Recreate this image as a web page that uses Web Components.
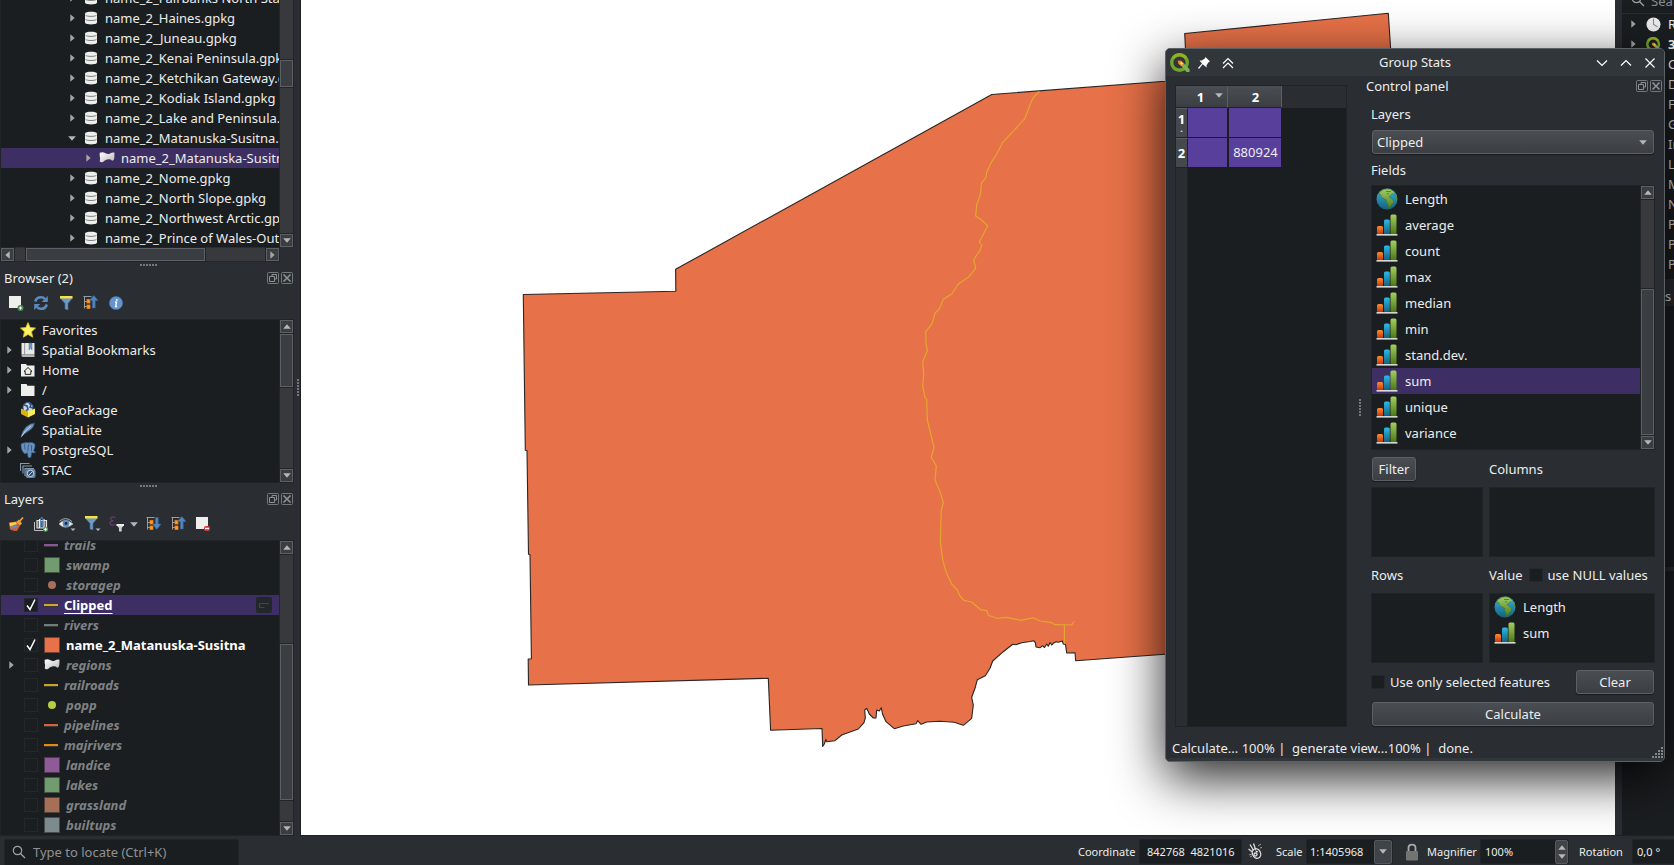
<!DOCTYPE html>
<html lang="en">
<head>
<meta charset="utf-8">
<title>QGIS – Group Stats</title>
<style>
html,body{margin:0;height:100%;overflow:hidden;background:#2a2e32}
body{font:13px "Noto Sans","Open Sans",sans-serif;color:#eceded}
</style>
</head>
<body>
<qg-app></qg-app>
<script>
const def=(name,css,html)=>customElements.define(name,class extends HTMLElement{
  constructor(){super();this.attachShadow({mode:'open'})}
  connectedCallback(){
    const a=n=>this.getAttribute(n);
    this.shadowRoot.innerHTML=`<style>*{box-sizing:border-box}${css}</style>`+(typeof html==='function'?html(a):html);
  }
});

/* ---- icons: [width, height, markup] ---- */
const tree=(up)=>`<path d="M.5 1.500h8M1.500 2v11.500M1.500 6.500H4M1.500 11.500H4" stroke="#9a9d9f" fill="none"/><rect x="4" y="4.500" width="3" height="3.500" fill="#f9a13a" stroke="#f57900" stroke-width=".8"/><rect x="4" y="10" width="3" height="3.500" fill="#f9a13a" stroke="#f57900" stroke-width=".8"/>`+(up?`<path d="M10.800 .5L15 5.500h-2.800V13H9.400V5.500H6.600z" fill="#5585ba" stroke="#3465a4" stroke-width=".6"/>`:`<path d="M9.400 1.500h2.800V8H15l-4.200 5.500L6.600 8h2.800z" fill="#5585ba" stroke="#3465a4" stroke-width=".6"/>`);
const I={
 db:[16,16,`<g fill="#eeeeec"><path d="M2 3.500C2 1 14 1 14 3.500V12.500C14 15 2 15 2 12.500z"/></g><path d="M2.500 5.200c1 1.600 10 1.600 11 0M2.500 9.300c1 1.600 10 1.600 11 0" stroke="#7d8080" fill="none" stroke-width="1"/>`],
 poly:[16,16,`<defs><linearGradient id="g" x1="0" y1="0" x2="1" y2="1"><stop stop-color="#fff"/><stop offset="1" stop-color="#b9bbb8"/></linearGradient></defs><path d="M.7 2.700Q4 1.500 6 3Q9 4.800 11 3.500Q13.500 2 15.500 2.800L15.300 8Q15 10.800 13.300 10.800Q11.500 8.800 8 9.500Q5.500 10 4 12Q1.500 12.600 .8 11.500Q1.600 8 .7 6z" fill="url(#g)"/>`],
 star:[16,16,`<path d="M8 .6l2.200 5 5.300.5-4 3.600 1.200 5.500L8 12.400l-4.700 2.800 1.200-5.500-4-3.600 5.300-.5z" fill="#fdf36a" stroke="#d9bd17" stroke-width=".9"/>`],
 book:[16,16,`<path d="M1.500 1h3v11.500H1.500zM5 1h9.500v11.500H5z" fill="#e9e9e7"/><path d="M1.500 12.500h13V15H3q-1.500 0-1.500-1.500z" fill="#b7b9b8"/><path d="M4.700 1v11.500" stroke="#aaa"/><path d="M9 1h3v7l-1.500-2L9 8z" fill="#6d97c4" stroke="#3465a4" stroke-width=".4"/>`],
 home:[16,16,`<path d="M1 2h5l1 1.500h7.500V14.500H1z" fill="#eeeeec"/><path d="M8 5.500l4 3.900h-1.200v3H5.200v-3H4z" fill="none" stroke="#222" stroke-width="1"/>`],
 folder:[16,16,`<path d="M1 2h5.500l1 1.700H14.500V14H1z" fill="#eeeeec"/>`],
 gpkg:[16,16,`<circle cx="8" cy="5.500" r="5" fill="#c8d8ea" stroke="#3d679c"/><path d="M4 3l3 1 1 3-2 2M9 1l2 2-1 2 3 1" stroke="#30547f" fill="none" stroke-width="1.600"/><path d="M1 6.500l7 3v6L1 12z" fill="#d9b40c"/><path d="M15 6.500l-7 3v6l7-3.500z" fill="#fbed58"/>`],
 feather:[16,16,`<path d="M.8 15.500Q2 9 6.500 4.500Q10.500 1 14.500 1Q14 6 9.500 8.500L4 12.300z" fill="#6b93bd" stroke="#2d4b70" stroke-width=".6"/><path d="M1.500 14.500Q5 8 11 4" stroke="#d3e0ee" stroke-width=".9" fill="none"/>`],
 pg:[16,16,`<path d="M1 3Q1 .8 4 1Q5.500 0 8 .8Q12-.2 14.300 1.500Q16 3.500 13.500 9L15.500 10Q13.500 11.500 11.500 10.500L11 15Q9.500 16.300 8 15L7.500 10.500Q5.500 12.500 4 11.300Q1 8 1 3z" fill="#6791bd" stroke="#345f8e" stroke-width=".6"/><path d="M5 1.500Q4 4 5 7.500M9 2Q7.500 5 8 9M11.500 3v6" stroke="#2f5279" fill="none" stroke-width=".8"/>`],
 stac:[16,16,`<path d="M.5 9V1.500h9M3 11.500V4h9M5 14V6.500h9" stroke="#8598ac" fill="none" stroke-width="1.200"/><rect x="5.500" y="7" width="10" height="9" rx="2" fill="#6284a8"/><circle cx="10.500" cy="11.400" r="3.200" fill="#31506f" stroke="#d5dde6" stroke-width=".9"/><path d="M8.500 13.500l4-4" stroke="#d5dde6" stroke-width=".9"/>`],
 add:[16,16,`<rect x="1" y="1" width="12" height="12" fill="#eeeeec"/><circle cx="12.500" cy="13" r="3" fill="#4a8a50"/><path d="M11 13h3M12.500 11.500v3" stroke="#fff"/>`],
 rm:[16,16,`<rect x="1" y="1" width="12" height="12" fill="#eeeeec"/><rect x="9" y="10" width="6" height="5" rx="2" fill="#e23b3b"/><path d="M10 12.500h4" stroke="#fff" stroke-width="1.300"/>`],
 refresh:[16,16,`<path d="M2.200 6.500Q3.500 2.200 8 2.200Q10.500 2.200 12 4M13.800 9.500Q12.500 13.800 8 13.800Q5.500 13.800 4 12" stroke="#5b8ac0" stroke-width="2.600" fill="none"/><path d="M14.800 1v6H8.700zM1.200 15V9h6.100z" fill="#5b8ac0"/>`],
 filter:[16,16,`<path d="M2 3h12.500L10 8.500V15l-3-1V8.500z" fill="#6f99c4" stroke="#3e6797" stroke-width=".6"/><rect x="2" y="1" width="12.500" height="2.500" fill="#f6e14a"/>`],
 filterd:[18,18,`<path d="M2 3h12.500L10 8.500V15l-3-1V8.500z" fill="#6f99c4" stroke="#3e6797" stroke-width=".6"/><rect x="2" y="1" width="12.500" height="2.500" fill="#f6e14a"/><path d="M12.500 13.500h5L15 16z" fill="#b4b6b7"/>`],
 up:[16,16,tree(1)],down:[16,16,tree(0)],
 info:[16,16,`<circle cx="8" cy="8" r="6.600" fill="#6595ce" stroke="#3f73ae" stroke-width=".6"/><path d="M8.800 4v1.800M7 7.300h1.500L7.600 11.600h1.600" stroke="#fff" stroke-width="1.400" fill="none"/>`],
 brush:[16,16,`<path d="M1 6.500l7-1 4 4-3 5.500-7-1.500z" fill="#d2612d"/><path d="M1.500 7l6-1L9 8l-7 2.500z" fill="#f0d44c"/><path d="M2 11l6-1.500 2 1.500-6 2.500z" fill="#5a8fca"/><path d="M3 12.500l5 .5-.5 2-4-.8z" fill="#ef4b38"/><path d="M8 6l4 3.500 2-2-3-4z" fill="#e2a04b"/><path d="M10.500 6.500L15 1.500" stroke="#e9a23b" stroke-width="1.800"/>`],
 group:[16,16,`<path d="M1.500 6v8.500H10" stroke="#bdbfc0" fill="none"/><path d="M4 4.500v7.500h9.500V4.500z" fill="#5d6266" stroke="#dcdddc" stroke-width="1.200"/><path d="M6.500 3v9M11 3v9" stroke="#eeeeec" stroke-width="1.100"/><path d="M7.600 11V3q1.200-3.500 2.400 0v7" fill="none" stroke="#5d8fc4" stroke-width="1"/><circle cx="12.500" cy="13.300" r="2.500" fill="#5a9a60"/><path d="M11 13.300h3M12.500 11.800v3" stroke="#fff"/>`],
 eye:[18,16,`<path d="M1 8Q7 1 15 8Q7 14.500 1 8z" fill="#f3f3f1" stroke="#a5a8aa" stroke-width=".8"/><path d="M1.500 5Q8 0 14 5.500" stroke="#a5a8aa" fill="none"/><circle cx="8" cy="7.500" r="3.400" fill="#5f89b8"/><circle cx="8" cy="7.500" r="1.400" fill="#1d2a3b"/><path d="M12.500 12.500h5L15 15z" fill="#b4b6b7"/>`],
 eps:[16,16,`<path d="M6.500 1.500Q1.500 0 1.700 3Q2 5 4.500 4.800Q.8 5 1 7.500Q2 10 6.500 8.500" fill="none" stroke="#673c6c" stroke-width="1.300"/><path d="M7.500 9h7.500L12.700 12v3.500h-2.700V12z" fill="#cfd0cf"/><rect x="7.500" y="8" width="7.500" height="2" fill="#eeeeec"/>`],
 float:[12,12,`<rect x=".5" y=".5" width="11" height="11" rx="1" fill="none" stroke="#74787b"/><path d="M2.500 4.500h5v5h-5zM5 4V2.500h4.500V7H8" fill="none" stroke="#8c9092"/>`],
 close:[12,12,`<rect x=".5" y=".5" width="11" height="11" rx="1" fill="none" stroke="#74787b"/><path d="M2.500 2.500l7 7M9.500 2.500l-7 7" stroke="#8c9092" stroke-width="1.700"/>`],
 q:[20,20,`<circle cx="9.500" cy="9.500" r="7.800" fill="none" stroke="#72a52c" stroke-width="3.400"/><path d="M3 5A8 8 0 0 1 16 5" fill="none" stroke="#93b023" stroke-width="3"/><path d="M10.500 12l2.500-2.500 6.500 6.800v2.700h-3z" fill="#7ab552"/><path d="M7.800 7.500l3.500.2 2.600 2.700-2.800 2.800-2.900-2.700z" fill="#f1852b"/><path d="M10 10l1.300-1.300 1.800 1.800-1.400 1.400z" fill="#fce94f"/>`],
 pin:[14,14,`<path d="M8.500 1l4.500 4.500-1.500.8-2 3 .2 2.200L5.700 8.200 2 13l-1-1L5 7.600 2.500 4.400l2.300.2 3-2z" fill="#fff"/>`],
 shade:[12,12,`<path d="M1 6.500L6 1.500l5 5M1 11l5-5 5 5" fill="none" stroke="#fff" stroke-width="1.200"/>`],
 wmin:[12,12,`<path d="M1 3.500L6 8.500l5-5" fill="none" stroke="#fff" stroke-width="1.200"/>`],
 wmax:[12,12,`<path d="M1 8.500L6 3.500l5 5" fill="none" stroke="#fff" stroke-width="1.200"/>`],
 wx:[12,12,`<path d="M1.500 1.500l9 9M10.500 1.500l-9 9" fill="none" stroke="#fff" stroke-width="1.200"/>`],
 globe:[22,22,`<defs><linearGradient id="o" x1="0" y1="0" x2="0" y2="1"><stop stop-color="#37b5e8"/><stop offset="1" stop-color="#156079"/></linearGradient><linearGradient id="l" x1="0" y1="0" x2="0" y2="1"><stop stop-color="#a0cf68"/><stop offset="1" stop-color="#4d7a17"/></linearGradient></defs><circle cx="11" cy="11" r="10.500" fill="url(#o)"/><path d="M3.500 4Q8 0 14 1Q18 3 19.500 6Q17 6.500 16.500 5.500L13 8.500Q14 10 16.500 11.500L17.800 13Q17 15.500 15.500 17L12.500 20.500L12 17Q10 14 10.500 12L6 9.800L4.500 6.500L2.800 6.500z" fill="url(#l)" stroke="#46731a" stroke-width=".5"/><path d="M20.800 7.500l-1.500 1.500 1.800 3.500z" fill="#5c8f23"/><path d="M10 3.500h5M11 5.500l2 .5" stroke="#60802f"/>`],
 bars:[22,22,`<defs><linearGradient id="a" x1="0" y1="0" x2="0" y2="1"><stop stop-color="#ff8d2e"/><stop offset="1" stop-color="#c42f0a"/></linearGradient><linearGradient id="b" x1="0" y1="0" x2="0" y2="1"><stop stop-color="#2cb9ea"/><stop offset="1" stop-color="#145e78"/></linearGradient><linearGradient id="c" x1="0" y1="0" x2="0" y2="1"><stop stop-color="#a3cf60"/><stop offset="1" stop-color="#4a7516"/></linearGradient></defs><rect x="1" y="12" width="6" height="8.500" rx="1.500" fill="url(#a)"/><rect x="8" y="5.500" width="5.800" height="15" rx="1.500" fill="url(#b)"/><rect x="14.500" y=".5" width="6" height="20" rx="1.500" fill="url(#c)"/><rect x=".5" y="20.200" width="21" height="1.300" fill="#fff"/>`],
 search:[14,14,`<circle cx="5.500" cy="5.500" r="4.200" fill="none" stroke="#9ea1a3" stroke-width="1.200"/><path d="M8.700 8.700L13 13" stroke="#9ea1a3" stroke-width="1.300"/>`],
 clock:[15,15,`<circle cx="7.500" cy="7.500" r="7" fill="#ececec"/><path d="M7.500 1.500v6l4 2.300" fill="none" stroke="#8a8d8e" stroke-width="1.100"/>`],
 mouse:[16,18,`<g fill="none" stroke="#dededd" stroke-width="1.300"><path d="M3 2.500l3.500 6M6.500 1.500l2.200 6.200M1.500 7l4 3"/><ellipse cx="9.500" cy="11.500" rx="4" ry="5" transform="rotate(-25 9.500 11.500)"/><circle cx="8.500" cy="12.500" r="1.500"/></g><path d="M11 4l3-2M2 13l3-1M13 6l2-.5M3 15l2-1" stroke="#9b9c9c"/><path d="M8 8.500l3 .5-1 2z" fill="#eee"/>`],
 lock:[14,18,`<path d="M3.500 9V5Q3.500 1.700 7 1.700T10.500 5V9" fill="none" stroke="#a9aaab" stroke-width="1.800"/><rect x="1" y="8" width="12" height="9.500" rx="1" fill="#737372"/>`],
 check:[14,14,`<path d="M3 7.500l3 4 5-10" fill="none" stroke="#fff" stroke-width="1.500"/>`],
 chip:[16,16,`<rect width="16" height="16" rx="2" fill="#23262b"/><path d="M3 6.500h10M3.500 6.500v4h5" stroke="#41454c" fill="none" stroke-width="1"/>`],
 r:[5,8,`<path d="M.3.200L4.700 4 .3 7.800z" fill="#a4a6a7"/>`],
 d:[8,5,`<path d="M.2.300h7.600L4 4.700z" fill="#b4b6b7"/>`],
 u:[8,5,`<path d="M.2 4.700h7.600L4 .3z" fill="#b4b6b7"/>`],
 l:[5,8,`<path d="M4.700.200L.3 4l4.400 3.800z" fill="#b4b6b7"/>`]
};
def('qg-icon',':host{display:inline-flex;flex:none}svg{display:block}',a=>{
  const [w,h,m]=I[a('name')];const k=a('scale')||1;
  return `<svg width="${w*k}" height="${h*k}" viewBox="0 0 ${w} ${h}">${m}</svg>`});
def('qg-symbol',':host{display:inline-flex;width:16px;height:16px;align-items:center;justify-content:center}.fill{width:16px;height:16px;border:1px solid #111;border-color:color-mix(in srgb,var(--c),#222 60%);background:var(--c)}.line{width:14px;height:3px;margin:0 2px 0 0;background:var(--c);border-bottom:1px solid #3a3b35}.point{width:8px;height:8px;margin-bottom:1px;border-radius:50%;background:var(--c)}',
  a=>`<i class="${a('kind')}" style="--c:${a('color')}"></i>`);
def('qg-check',':host{display:flex;width:14px;height:14px;background:#1b1e20;border:1px solid #24282b;flex:none;align-items:center;justify-content:center}',
  a=>a('on')!==null?'<qg-icon name="check"></qg-icon>':'');

/* A tree line: lead (arrow) column, icon column, then the slotted label. */
def('qg-row',`:host{display:flex;height:20px;align-items:center;white-space:nowrap;overflow:hidden;flex:none}
:host([selected]){background:#3d2f64}.lead{display:flex;justify-content:flex-end;flex:none}.ic{display:flex;flex:none}.tx{line-height:20px;height:20px}`,
 a=>{const ar=a('arrow');return `<span class="lead" style="width:${a('lead')}px;padding-right:${a('gap')-(ar==='d'?1:0)}px">${ar?`<qg-icon name="${ar}"></qg-icon>`:''}</span><span class="ic" style="width:${a('icw')}px">${a('icon')?`<qg-icon name="${a('icon')}" scale="${a('k')||1}"></qg-icon>`:''}</span><span class="tx"><slot></slot></span>`});
def('qg-layer',`:host{display:flex;height:20px;align-items:center;white-space:nowrap;flex:none;font-weight:bold;font-style:italic;color:#7f8284;padding-right:7px}
:host([active]){font-style:normal;color:#fff}:host([selected]){background:#3d2f64}:host([selected]) .tx{text-decoration:underline;text-underline-offset:3px;text-decoration-thickness:1px;text-decoration-skip-ink:none}
.lead{width:23px;padding-left:8px;display:flex}qg-symbol,.s{margin-left:6px;display:flex}.tx{flex:1;line-height:20px;height:20px}`,
 a=>`<span class="lead">${a('arrow')!==null?'<qg-icon name="r"></qg-icon>':''}</span><qg-check ${a('active')!==null?'on':''}></qg-check>${a('kind')==='poly'?'<span class="s"><qg-icon name="poly"></qg-icon></span>':`<qg-symbol kind="${a('kind')}" color="${a('color')}"></qg-symbol>`}<span class="tx" style="margin-left:${a('kind')==='line'?4:6}px"><slot></slot></span>${a('selected')!==null?'<qg-icon name="chip"></qg-icon>':''}`);
/* Scroll bar: before/thumb sizes in px, first end button optional. */
def('qg-scroll',`:host{display:flex;flex-direction:column;width:14px;background:#37393d;flex:none;border:0 solid #232629;border-left-width:1px}
:host([h]){flex-direction:row;width:auto;height:14px;border-left-width:0;border-bottom-width:1px}.b,.t{border:1px solid #5d6063;background:#3a3d41;flex:none;display:flex;align-items:center;justify-content:center}
.b{width:13px;height:13px;box-shadow:0 0 0 1px #222528}.t{box-shadow:0 0 0 1px #222528}.g{flex:none}`,
 a=>{const h=a('h')!==null,p=h?'width':'height';return (a('nofirst')===null?`<div class="b"><qg-icon name="${h?'l':'u'}"></qg-icon></div>`:'')+`<div class="g" style="${p}:${a('before')}px"></div><div class="t" style="${p}:${a('thumb')}px"></div><div style="flex:1"></div><div class="b"><qg-icon name="${h?'r':'d'}"></qg-icon></div>`});
def('qg-grip',':host{display:flex;justify-content:center;gap:1px;height:2px}:host([v]){flex-direction:column;height:auto;width:2px}i{width:2px;height:2px;background:#76797b}','<i></i>'.repeat(6));
def('qg-dockhead',':host{display:flex;align-items:center;height:20px;line-height:20px;gap:2px}b{flex:1;font-weight:normal}',
 '<b><slot></slot></b><qg-icon name="float"></qg-icon><qg-icon name="close"></qg-icon>');

const names=['Fairbanks North Sta','Haines.gpkg','Juneau.gpkg','Kenai Peninsula.gpkg','Ketchikan Gateway.gpkg','Kodiak Island.gpkg','Lake and Peninsula.gpkg','Matanuska-Susitna.gpkg','*','Nome.gpkg','North Slope.gpkg','Northwest Arctic.gpkg','Prince of Wales-Outer'];
const layers=[['trails','line','#89559c'],['swamp','fill','#729b6f'],['storagep','point','#a8705a'],['Clipped','line','#d1a52f','active selected'],['rivers','line','#6e7c80'],['name_2_Matanuska-Susitna','fill','#e77148','active'],['regions','poly','','arrow'],['railroads','line','#c9a227'],['popp','point','#b7cd45'],['pipelines','line','#d5623c'],['majrivers','line','#e08b16'],['landice','fill','#8e5b98'],['lakes','fill','#729b6f'],['grassland','fill','#a56f58'],['builtups','fill','#7d8b8f']];
def('qg-left',`:host{display:flex;flex-direction:column;width:301px;height:836px;background:#2a2e32;overflow:hidden;position:relative;border-right:1px solid #1d2022}
.box{display:flex;background:#1b1e20;border:1px solid #212427;width:294px;overflow:hidden;flex:none}.list{flex:1;min-width:0;display:flex;flex-direction:column;overflow:hidden}
.l1 .list{width:278px;margin-top:-12px}qg-dockhead{width:293px;padding-left:4px;flex:none}.tools{display:flex;align-items:center;flex:none;height:30px}
qg-grip{width:297px;flex:none}.side{position:absolute;left:297px;top:379px;width:2px}`,
`<div class="box l1" style="height:247px;border-width:0 1px 0 1px"><div class="list">${names.map(n=>n==='*'?'<qg-row selected lead="98" gap="8" icw="22" arrow="r" icon="poly">name_2_Matanuska-Susitna</qg-row>':`<qg-row lead="82" gap="8" icw="22" arrow="${n.startsWith('Mat')?'d':'r'}" icon="db">name_2_${n}</qg-row>`).join('')}</div><qg-scroll nofirst before="60" thumb="27"></qg-scroll></div>
<div style="display:flex;padding-left:1px;width:279px;height:14px;margin-top:1px;flex:none"><qg-scroll h before="12" thumb="179" style="flex:1"></qg-scroll></div>
<qg-grip style="margin-top:2px"></qg-grip>
<qg-dockhead style="margin-top:2px">Browser (2)</qg-dockhead>
<div class="tools" style="margin-top:0;padding-left:8px;gap:9px"><qg-icon name="add"></qg-icon><qg-icon name="refresh"></qg-icon><qg-icon name="filter"></qg-icon><qg-icon name="up"></qg-icon><qg-icon name="info"></qg-icon></div>
<div class="box" style="height:164px;margin-top:1px"><div class="list">
<qg-row lead="19" gap="8" icw="22" icon="star">Favorites</qg-row><qg-row lead="19" gap="8" icw="22" arrow="r" icon="book">Spatial Bookmarks</qg-row><qg-row lead="19" gap="8" icw="22" arrow="r" icon="home">Home</qg-row><qg-row lead="19" gap="8" icw="22" arrow="r" icon="folder">/</qg-row><qg-row lead="19" gap="8" icw="22" icon="gpkg">GeoPackage</qg-row><qg-row lead="19" gap="8" icw="22" icon="feather">SpatiaLite</qg-row><qg-row lead="19" gap="8" icw="22" arrow="r" icon="pg">PostgreSQL</qg-row><qg-row lead="19" gap="8" icw="22" icon="stac">STAC</qg-row></div><qg-scroll before="1" thumb="53"></qg-scroll></div>
<qg-grip style="margin-top:2px"></qg-grip>
<qg-dockhead style="margin-top:2px">Layers</qg-dockhead>
<div class="tools" style="padding-left:8px"><qg-icon name="brush" style="margin-right:9px"></qg-icon><qg-icon name="group" style="margin-right:9px"></qg-icon><qg-icon name="eye" style="margin-right:7px"></qg-icon><qg-icon name="filterd" style="margin-right:8px"></qg-icon><qg-icon name="eps" style="margin-right:5px"></qg-icon><qg-icon name="d" style="margin-right:8px"></qg-icon><qg-icon name="down" style="margin-right:9px"></qg-icon><qg-icon name="up" style="margin-right:8px"></qg-icon><qg-icon name="rm"></qg-icon></div>
<div class="box" style="height:296px;margin-top:1px"><div class="list"><div style="margin-top:-6px">${layers.map(l=>`<qg-layer kind="${l[1]}" color="${l[2]}" ${l[3]||''}>${l[0]}</qg-layer>`).join('')}</div></div><qg-scroll before="90" thumb="156"></qg-scroll></div>
<qg-grip v class="side"></qg-grip>`);

def('qg-map',':host{display:block;flex:1;background:#fff;overflow:hidden}svg{display:block}',
`<svg width="1314" height="835" viewBox="301 0 1314 835"><g fill="#e77148" stroke="#2b2523" stroke-width="1.100" stroke-linejoin="round"><path d="M523.300 294.500L675.800 291.300 675.600 269.300 991.800 94.500 1165 81.300 1187 79 1184.700 33.500 1388.300 13.300 1394 100 1394 640 1165 654.300 1075.700 660.700 1075 652.700 1066.700 653 1065.500 644.500 1063.300 644 1062.300 641 1058.300 642.300 1056 641.800 1053.300 643.300 1051.700 645 1050 642.500 1048.300 646.300 1046.700 644 1044.500 647.500 1042.500 645.700 1040 647.800 1036 647 1035.300 642.700 1033.700 640.700 1030 641.500 1021.700 642.700 1016 644.700 1012.700 644.300 1003.300 651.700 992.700 661 990 668.300 985.300 675.700 977.300 679.700 975 688.300 971.700 697.300 973.300 705 971.700 718.300 963.300 725.300 954.300 722.300 940 721.300 926.700 722 921 724.300 917.700 720.700 916 723.700 903.300 726 894.300 728.700 886 721.700 882.500 714 881.300 707.700 879.300 711 876.700 710 876 718 873.300 718 869.300 714 866.700 708.300 864.700 710 865.300 718 864 722.700 858.300 729 850 732 841.700 735 835 740.700 826.700 741.700 826 739.300 824.300 744 822.700 746.500 822 728.500 770.600 730.300 768.300 678.300 528.500 685 528.200 659 531.400 658.700 530 554.500 528.500 554.300 527 450.500 525.300 450.300z"/></g>
<path d="M1039.300 91.500L1033.300 97.500 1030 105 1025 118.300 1015 129.300 1002.700 142.300 996.700 154.300 991.700 161.700 986.700 171.700 986 177.300 981.300 183.300 980.700 193.300 976.700 205 975.700 216 981.700 220 987.700 225.700 979.300 242 981.700 245 980 250.700 976.700 255 973.700 260 975.700 268.300 968.300 277.300 958.300 284 951.700 294 943.300 299.300 939.300 309 935.300 312.700 931.700 324.300 925.700 331.700 926 343.300 927.300 350.700 922.700 361.700 923.700 373.300 922.700 386.700 925 397.300 926.700 399.300 927.300 420 934 447.300 931.300 457.300 936.300 466 935 480 940 491.700 943.300 502.700 941.300 510 940.300 541.700 942.700 560 946 571.700 951.700 584 957.300 590 960 596 964 600.300 971.700 602 980.700 609.700 986.700 610.700 988.300 615.300 996.700 618.300 1006.700 617.300 1021 620.300 1033.300 617.700 1040 621 1051.700 622.700 1055 624.700 1071.700 625 1074.300 621M1064.400 625V643.500" fill="none" stroke="#e5a52f" stroke-width="1.200" stroke-linejoin="round"/></svg>`);

def('qg-right',`:host{display:flex;flex-direction:column;width:59px;background:#1b1e20;border-left:7px solid #2a2e32;overflow:hidden}
.s{display:flex;align-items:center;height:14px;padding:0 0 2px 9px;gap:6px;color:#8a8d8f;border-bottom:1px solid #2a2e32;line-height:14px;flex:none}
.s span{margin-top:-9px}.tab{height:27px;background:#2a2e32;padding-left:43px;margin-top:5px;line-height:34px}.sep{height:4px;background:#2a2e32;margin-top:261px}`,
`<div class="s"><qg-icon name="search" style="margin-top:-12px"></qg-icon><span>Sea</span></div>
<qg-row lead="24" gap="10" icw="22" arrow="r" icon="clock">R</qg-row><qg-row lead="24" gap="10" icw="22" arrow="r" icon="q" k=".75"><b>3</b></qg-row>
${['C','D','F','G','In','L','M','N','P','P','P'].map(t=>`<qg-row lead="24" gap="10" icw="22">${t}</qg-row>`).join('')}
<div class="tab">s</div><div class="sep"></div>`);

def('qg-button',':host{display:flex;align-items:center;justify-content:center;height:24px;border:1px solid #5c6064;border-radius:3px;background:linear-gradient(#4a4e52,#3b3e42);box-shadow:0 1px 1px #191b1d}','<slot></slot>');
def('qg-field',`:host{display:flex;height:26px;align-items:center;padding-left:4px;gap:8px;flex:none;line-height:26px}:host([selected]){background:#3d2f64}span{padding:0 0 1px 0;margin-left:-1px}`,a=>`<qg-icon name="${a('icon')||'bars'}"></qg-icon><span><slot></slot></span>`);
def('qg-well',':host{display:block;background:#1b1e20;border:1px solid #212427;height:70px}','<slot></slot>');
def('qg-table',`:host{display:grid;grid-template-columns:12px 40px 1px 53px 1fr;grid-template-rows:22px 30px 30px 1fr;width:172px;height:642px;border:1px solid #212427;background:#1b1e20;flex:none}
.h{background:linear-gradient(#4a4e52,#3b3e42);font-weight:bold;color:#fff;border-right:1px solid #5b5e62;border-bottom:1px solid #202325;display:flex;align-items:center;justify-content:center;position:relative}
.c{background:#583f9b;border:solid #1b1e20;border-width:0 1px 1px 0;display:flex;align-items:center;justify-content:center}
.v{background:#45484c;font-weight:bold;color:#fff;display:flex;flex-direction:column;align-items:center;justify-content:center;border-bottom:1px solid #202325;border-top:1px solid #5b5e62;border-right:1px solid #202325;line-height:15px}
.fill{background:#2a2e32}.h qg-icon{position:absolute;right:4px;top:7px}`,
`<div class="h" style="grid-column:1/3;padding-right:2px">1<qg-icon name="d"></qg-icon></div><div class="h" style="grid-column:3/5;padding-left:2px">2</div><div class="fill"></div>
<div class="v" style="padding-bottom:3px">1<qg-icon name="u" scale=".4" style="margin-top:3px"></qg-icon></div><div class="c"></div><div class="c" style="grid-column:3/5;border-left:1px solid #1b1e20"></div><div></div>
<div class="v">2</div><div class="c"></div><div class="c" style="grid-column:3/5;border-left:1px solid #1b1e20;padding:0 0 1px 1px">880924</div><div></div>
<div class="fill" style="border-right:1px solid #202325"></div>`);
def('qg-stats',`:host{position:absolute;left:1165px;top:48px;width:500px;height:714px;display:flex;flex-direction:column;background:#2a2e32;border:1px solid #5b6165;border-radius:5px;box-shadow:0 16px 51px rgba(0,0,0,.86);overflow:hidden}
.title{height:27px;background:#31363b;display:flex;align-items:center;padding:0 8px 0 4px;flex:none;line-height:27px}.title span{flex:1;text-align:center}
.body{display:flex;flex:none;height:655px;padding-left:9px}.cp{flex:1;margin-left:5px;display:flex;flex-direction:column}
.in{padding:0 9px 0 5px;display:flex;flex-direction:column;position:relative}.lb{height:18px;line-height:18px}
.combo{justify-content:space-between;padding:0 6px 0 4px;margin:0 1px 0 1px}.list{display:flex;height:265px;background:#1b1e20;border:1px solid #212427}.list>div{flex:1}
.g{display:grid;grid-template-columns:112px 1fr;column-gap:6px;align-items:center}.f{display:flex;align-items:center}
.stat{display:flex;align-items:center;padding:6px 0 0 6px;flex:1;line-height:20px;white-space:pre}.foot{height:3px;background:#31363b}
.gs{position:absolute;right:0;bottom:2px}.vg{width:2px;margin:323px 0 0 12px;align-self:flex-start}`,
`<div class="title"><qg-icon name="q"></qg-icon><qg-icon name="pin" style="margin-left:7px"></qg-icon><qg-icon name="shade" style="margin-left:11px"></qg-icon><span>Group Stats</span><qg-icon name="wmin"></qg-icon><qg-icon name="wmax" style="margin-left:12px"></qg-icon><qg-icon name="wx" style="margin-left:12px"></qg-icon></div>
<div class="body"><qg-table style="margin-top:9px"></qg-table>
<qg-grip v class="vg"></qg-grip>
<div class="cp"><qg-dockhead style="padding-right:2px">Control panel</qg-dockhead>
<div class="in"><div class="lb" style="margin-top:9px">Layers</div><qg-button class="combo" style="margin-top:7px">Clipped<qg-icon name="d"></qg-icon></qg-button>
<div class="lb" style="margin-top:7px">Fields</div>
<div class="list" style="margin-top:6px"><div><qg-field icon="globe">Length</qg-field>${['average','count','max','median','min','stand.dev.'].map(t=>`<qg-field>${t}</qg-field>`).join('')}<qg-field selected>sum</qg-field><qg-field>unique</qg-field><qg-field>variance</qg-field></div><qg-scroll before="90" thumb="146"></qg-scroll></div>
<div class="g" style="margin-top:7px"><qg-button style="width:44px;margin-left:1px">Filter</qg-button><span>Columns</span></div>
<div class="g" style="margin-top:6px"><qg-well></qg-well><qg-well></qg-well></div>
<div class="g" style="height:36px"><span>Rows</span><span class="f">Value<qg-check style="margin:0 5px 0 6px"></qg-check>use NULL values</span></div>
<div class="g"><qg-well></qg-well><qg-well><qg-field icon="globe">Length</qg-field><qg-field>sum</qg-field></qg-well></div>
<div class="f" style="margin-top:7px"><qg-check style="margin-right:5px"></qg-check><span style="flex:1">Use only selected features</span><qg-button style="width:78px;margin-right:1px">Clear</qg-button></div>
<qg-button style="margin:8px 1px 0 1px">Calculate</qg-button></div></div></div>
<div class="stat">Calculate... 100% |  generate view...100% |  done.</div><div class="foot"></div>
<svg class="gs" width="12" height="12" fill="#85888a">${[0,1,2,3].map(r=>[...Array(r+1)].map((_,i)=>`<rect x="${9-i*3}" y="${r*3}" width="2" height="2"/>`).join('')).join('')}</svg>`);

def('qg-status',`:host{display:flex;height:30px;align-items:center;background:#2a2e32;border-top:1px solid #1f2225;font-size:11px;padding-left:4px;white-space:nowrap;overflow:hidden}
.w{background:#1b1e20;border:1px solid #212427;height:25px;display:flex;align-items:center;border-radius:2px;flex:none;margin-top:2px}
.find{width:235px;height:27px;margin-top:3px;font-size:13px;color:#8f9294;padding-left:7px;gap:7px}.l{flex:none;overflow:visible;padding-top:2px}
.b{width:18px;height:24px;border:1px solid #55595c;background:#404347;display:flex;align-items:center;justify-content:center;margin-left:auto;border-radius:2px}`,
`<div class="w find"><qg-icon name="search"></qg-icon>Type to locate (Ctrl+K)</div>
<span class="l" style="margin-left:839px;width:61px">Coordinate</span><div class="w" style="width:103px;padding-left:7px;white-space:pre">842768  4821016</div><qg-icon name="mouse" style="margin:0 13px 0 5px"></qg-icon>
<span class="l" style="width:30px">Scale</span><div class="w" style="width:87px;padding-left:3px">1:1405968<div class="b"><qg-icon name="d"></qg-icon></div></div>
<qg-icon name="lock" style="margin:2px 8px 0 12px"></qg-icon><span class="l" style="width:53px">Magnifier</span><div class="w" style="width:89px;padding-left:4px">100%<div class="b" style="width:13px;flex-direction:column;gap:4px"><qg-icon name="u"></qg-icon><qg-icon name="d"></qg-icon></div></div>
<span class="l" style="margin-left:10px;width:53px">Rotation</span><div class="w" style="width:60px;padding-left:4px">0,0 °</div>`);

def('qg-app',':host{display:flex;flex-direction:column;width:1674px;height:865px;position:relative;overflow:hidden}.m{display:flex;height:835px;flex:none}qg-map{width:1314px;flex:none}',
'<div class="m"><qg-left></qg-left><qg-map></qg-map><qg-right></qg-right></div><qg-status></qg-status><qg-stats></qg-stats>');
</script>
</body>
</html>
